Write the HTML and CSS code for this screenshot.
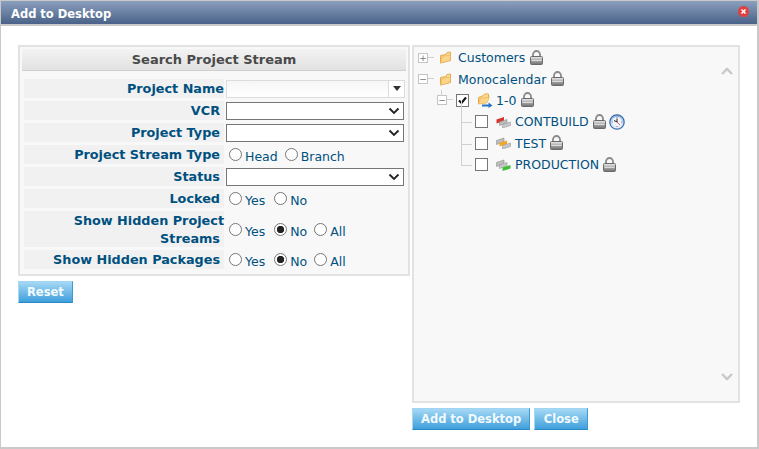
FILE: index.html
```html
<!DOCTYPE html>
<html lang="en">
<head>
<meta charset="utf-8">
<title>Add to Desktop</title>
<link rel="stylesheet" href="styles.css">
</head>
<body>
<svg class="defs" width="0" height="0" aria-hidden="true">
  <defs>
    <linearGradient id="lockBody" x1="0" y1="0" x2="0" y2="1"><stop offset="0" stop-color="#ececec"/><stop offset=".5" stop-color="#a8a8a8"/><stop offset="1" stop-color="#6f6f6f"/></linearGradient>
    <linearGradient id="folderFill" x1="0" y1="0" x2="0" y2="1"><stop offset="0" stop-color="#fde4a0"/><stop offset="1" stop-color="#f3b95a"/></linearGradient>
    <linearGradient id="clockFace" x1="0" y1="0" x2="0" y2="1"><stop offset="0" stop-color="#8fb8e6"/><stop offset="1" stop-color="#e8f2fb"/></linearGradient>
    <symbol id="lock" viewBox="0 0 13 15">
      <path d="M3 7V4.500a3.500 3.500 0 0 1 7 0V7" fill="none" stroke="#8a8a8a" stroke-width="1.800"/>
      <rect x=".5" y="6.500" width="12" height="8" rx="1" fill="url(#lockBody)" stroke="#6a6a6a"/>
      <rect x="1.500" y="10" width="10" height="1" fill="#dcdcdc"/>
    </symbol>
    <symbol id="folder" viewBox="0 0 13 13">
      <path d="M1.500 12V4.500L7 3.500 8 1.500 11.500 1V9.500Z" fill="url(#folderFill)" stroke="#e5a94a"/>
      <path d="M1.500 12L3.500 5.500 11.500 4 11 9.500Z" fill="#fbd68a" stroke="#e8b25a" stroke-width=".6"/>
    </symbol>
    <symbol id="folderArrow" viewBox="0 0 16 15">
      <path d="M1.500 11V4.500L6.500 2.500 7.500 1 11.500 1V6Z" fill="url(#folderFill)" stroke="#e5a94a"/>
      <path d="M1.500 11L3.500 5.500 12.500 4 10 10Z" fill="#fbd68a" stroke="#e8b25a" stroke-width=".6"/>
      <path d="M5 12.500H12" stroke="#2a74c4" stroke-width="2"/>
      <path d="M11.500 9.500L15.500 12.500 11.500 15Z" fill="#2a74c4"/>
    </symbol>
    <symbol id="clock" viewBox="0 0 16 16">
      <circle cx="8" cy="8" r="7.200" fill="url(#clockFace)" stroke="#3a6aa8" stroke-width="1.200"/>
      <circle cx="8" cy="8" r="5" fill="#eef5fc"/>
      <path d="M8 4.500V8L5 6.500" fill="none" stroke="#222" stroke-width="1"/>
      <path d="M8 8L11 11" stroke="#c33" stroke-width=".8"/>
      <path d="M8 3v1M8 12v1M3 8h1M12 8h1" stroke="#c33" stroke-width=".8"/>
    </symbol>
  </defs>
</svg>
<div class="dialog">
  <header class="titlebar">
    <h1 class="title">Add to Desktop</h1>
    <svg class="close-x" viewBox="0 0 11 11" aria-label="Close"><circle cx="5.500" cy="5.500" r="5.500" fill="#e2403f"/><path d="M3.500 3.500l4 4M7.500 3.500l-4 4" stroke="#fff" stroke-width="1.600"/></svg>
  </header>
  <main class="content">
    <section class="left">
      <form class="panel">
        <h2 class="panel-head">Search Project Stream</h2>
        <div class="form-grid">
          <label class="lab flush">Project Name</label>
          <div class="ctl"><div class="combo"><input class="combo-input" type="text"><span class="combo-btn"><span class="tri"></span></span></div></div>
          <label class="lab">VCR</label>
          <div class="ctl"><select class="sel"><option></option></select></div>
          <label class="lab">Project Type</label>
          <div class="ctl"><select class="sel"><option></option></select></div>
          <label class="lab">Project Stream Type</label>
          <div class="ctl radios"><input class="rad" type="radio" name="t"><span class="opt">Head</span><input class="rad" type="radio" name="t"><span class="opt">Branch</span></div>
          <label class="lab">Status</label>
          <div class="ctl"><select class="sel"><option></option></select></div>
          <label class="lab">Locked</label>
          <div class="ctl radios"><input class="rad" type="radio" name="l"><span class="opt yes">Yes</span><input class="rad" type="radio" name="l"><span class="opt">No</span></div>
          <label class="lab"><span class="over">Show Hidden Project</span><br>Streams</label>
          <div class="ctl radios"><input class="rad" type="radio" name="s"><span class="opt yes">Yes</span><input class="rad" type="radio" name="s" checked><span class="opt">No</span><input class="rad" type="radio" name="s"><span class="opt">All</span></div>
          <label class="lab">Show Hidden Packages</label>
          <div class="ctl radios"><input class="rad" type="radio" name="p"><span class="opt yes">Yes</span><input class="rad" type="radio" name="p" checked><span class="opt">No</span><input class="rad" type="radio" name="p"><span class="opt">All</span></div>
        </div>
      </form>
      <div class="actions"><button class="btn" type="button">Reset</button></div>
    </section>
    <section class="right">
      <div class="tree-panel">
        <ul class="tree">
          <li class="node lv0"><span class="exp">+</span><svg class="ic-folder"><use href="#folder"/></svg><a class="name">Customers</a><svg class="ic-lock"><use href="#lock"/></svg></li>
          <li class="node lv0"><span class="exp">−</span><svg class="ic-folder"><use href="#folder"/></svg><a class="name">Monocalendar</a><svg class="ic-lock"><use href="#lock"/></svg></li>
          <li class="node lv1"><span class="exp up">−</span><input class="chk" type="checkbox" checked><svg class="ic-open"><use href="#folderArrow"/></svg><a class="name">1-0</a><svg class="ic-lock"><use href="#lock"/></svg></li>
          <li class="node lv2"><input class="chk" type="checkbox"><svg class="ic-stream" viewBox="0 0 15 12"><path d="M.5 3.500L8 1V5L.5 7.500Z" fill="#d8342c"/><path d="M3.500 6L11 3.500V7L3.500 9.500Z" fill="#bdbdbd" stroke="#8f8f8f" stroke-width=".6"/><path d="M6.500 8.500L14.500 6V9.500L6.500 12Z" fill="#c8c8c8" stroke="#9a9a9a" stroke-width=".6"/></svg><a class="name">CONTBUILD</a><svg class="ic-lock"><use href="#lock"/></svg><svg class="ic-clock"><use href="#clock"/></svg></li>
          <li class="node lv2"><input class="chk" type="checkbox"><svg class="ic-stream" viewBox="0 0 15 12"><path d="M.5 3.500L8 1V5L.5 7.500Z" fill="#bdbdbd" stroke="#8f8f8f" stroke-width=".6"/><path d="M3.500 6L11 3.500V7L3.500 9.500Z" fill="#f5a81e"/><path d="M6.500 8.500L14.500 6V9.500L6.500 12Z" fill="#c8c8c8" stroke="#9a9a9a" stroke-width=".6"/></svg><a class="name">TEST</a><svg class="ic-lock"><use href="#lock"/></svg></li>
          <li class="node lv2"><input class="chk" type="checkbox"><svg class="ic-stream" viewBox="0 0 15 12"><path d="M.5 3.500L8 1V5L.5 7.500Z" fill="#bdbdbd" stroke="#8f8f8f" stroke-width=".6"/><path d="M3.500 6L11 3.500V7L3.500 9.500Z" fill="#c8c8c8" stroke="#949494" stroke-width=".6"/><path d="M6.500 8.500L14.500 6V9.500L6.500 12Z" fill="#3fbf3a"/></svg><a class="name">PRODUCTION</a><svg class="ic-lock"><use href="#lock"/></svg></li>
        </ul>
        <svg class="chev chev-up" viewBox="0 0 12 8"><path d="M1 7L6 2l5 5" fill="none" stroke="#c8c8c8" stroke-width="2.400"/></svg>
        <svg class="chev chev-down" viewBox="0 0 12 8"><path d="M1 1l5 5 5-5" fill="none" stroke="#c8c8c8" stroke-width="2.400"/></svg>
      </div>
      <div class="actions"><button class="btn" type="button">Add to Desktop</button><button class="btn" type="button">Close</button></div>
    </section>
  </main>
</div>
</body>
</html>
```

FILE: styles.css
```css
* { box-sizing: border-box; }
html, body { margin: 0; padding: 0; }
body { width: 759px; height: 449px; background: #fff; font-family: "DejaVu Sans", sans-serif; overflow: hidden; }
.defs { position: absolute; }
.dialog { width: 759px; height: 449px; border: solid #c9c9c9; border-width: 1px 2px 2px 1px; display: flex; flex-direction: column; background: #fff; }
.titlebar { height: 25px; flex: none; display: flex; align-items: center; justify-content: space-between; padding: 0 8px 2px 10px; background: linear-gradient(#8b9fbd, #4a6289) padding-box; border-bottom: 2px solid #c9c9c9; }
.title { margin: 0; padding-top: 4px; font-size: 11.500px; font-weight: bold; color: #fff; }
.close-x { width: 11px; height: 11px; flex: none; }
.content { flex: 1; display: flex; gap: 2px; padding: 19px 17px 0; }
.left { width: 392px; flex: none; }
.right { width: 328px; flex: none; }
.panel { height: 231px; margin: 0; padding: 2px; background: #f8f8f8; border: 2px solid #e2e2e2; }
.panel-head { margin: 0 0 8px; height: 22px; line-height: 21px; font-size: 13px; font-weight: bold; text-align: center; color: #4a4a4a; background: linear-gradient(#f3f3f3, #e2e2e2); border-bottom: 1px solid #cfcfcf; }
.form-grid { display: grid; grid-template-columns: 200px 1fr; grid-template-rows: repeat(6, 19px) 36px 19px; row-gap: 3px; column-gap: 2px; padding: 0 2px; }
.lab { display: block; padding: 1px 4px 0 0; font-size: 12.800px; font-weight: bold; line-height: 18px; color: #00507f; text-align: right; background: #f1f1f1; white-space: nowrap; }
.lab.flush { padding-right: 0; }
.over { margin-right: -4px; }
.ctl { display: flex; align-items: center; min-width: 0; }
.sel { appearance: none; width: 178px; height: 18px; font-size: 12px; border: 1px solid #767676; border-radius: 0; margin: 0; padding: 0; background: #fff url("data:image/svg+xml,%3Csvg xmlns='http://www.w3.org/2000/svg' width='12' height='8'%3E%3Cpath d='M1.500 1.500L6 6l4.500-4.500' fill='none' stroke='%23222' stroke-width='1.800'/%3E%3C/svg%3E") no-repeat right 3px center; }
.combo { width: 179px; height: 18px; display: flex; border: 1px solid #dcdcdc; background: #fff; }
.combo-input { flex: 1; min-width: 0; border: 0; padding: 0; outline: 0; background: linear-gradient(#f6f6f6, #fff); }
.combo-btn { width: 16px; border-left: 1px solid #dcdcdc; display: flex; align-items: center; justify-content: center; }
.tri { width: 0; height: 0; border: 4px solid transparent; border-top: 5px solid #333; border-bottom: 0; }
.radios { padding-left: 3px; }
.rad { appearance: none; width: 13px; height: 13px; margin: 0 3px 0 0; flex: none; border: 1px solid #767676; border-radius: 50%; background: #fff; }
.rad:checked { background: radial-gradient(circle, #222 3.400px, #fff 4px); }
.opt { font-size: 12.500px; line-height: 16px; color: #00507f; margin-right: 7px; padding-top: 5px; }
.opt.yes { margin-right: 9px; }
.actions { display: flex; gap: 4px; margin-top: 5px; }
.btn { height: 22px; min-width: 54px; padding: 0 8px; border: 1px solid #3f98d4; border-top-color: #9fd4f2; border-left-color: #a9d8f2; border-bottom-color: #2a88c9; font: bold 11.500px "DejaVu Sans", sans-serif; color: #f2fafe; background: linear-gradient(#a5d8f4, #3f9fdc); }
.tree-panel { position: relative; height: 358px; background: #f8f8f8; border: 2px solid #e2e2e2; }
.tree { list-style: none; margin: 0; padding: 0; }
.node { position: relative; height: 21.400px; display: flex; align-items: center; font-size: 12.500px; }
.lv0 { padding-left: 4px; }
.lv1 { padding-left: 23px; }
.lv2 { padding-left: 61px; }
.exp { position: relative; width: 10px; height: 10px; border: 1px solid #c4c4c4; background: #fff; color: #777; font-size: 9px; line-height: 8px; text-align: center; flex: none; margin-right: 11px; }
.exp::after { content: ""; position: absolute; left: 9px; top: 3px; width: 6px; height: 1px; background: #d0d0d0; }
.exp.up::before { content: ""; position: absolute; left: 3px; top: -6px; width: 1px; height: 6px; background: #d0d0d0; }
.lv1 .exp { margin-right: 9px; }
.chk { appearance: none; width: 13px; height: 13px; margin: 0 8px 0 0; flex: none; border: 1px solid #767676; background: #fff; }
.chk:checked { background: #fff url("data:image/svg+xml,%3Csvg xmlns='http://www.w3.org/2000/svg' width='11' height='11'%3E%3Cpath d='M2 5.500l2.500 2.500L9 2.500' fill='none' stroke='%23111' stroke-width='2'/%3E%3C/svg%3E") no-repeat center; }
.lv2::before { content: ""; position: absolute; left: 47px; top: -10px; width: 1px; height: 22px; background: #d0d0d0; }
.lv2::after { content: ""; position: absolute; left: 47px; top: 11px; width: 11px; height: 1px; background: #d0d0d0; }
.ic-folder { width: 13px; height: 13px; flex: none; margin-right: 6px; }
.ic-open { width: 16px; height: 15px; flex: none; margin-right: 3px; }
.ic-stream { width: 15px; height: 12px; flex: none; margin-right: 4px; }
.ic-lock { width: 13px; height: 15px; flex: none; margin-left: 5px; margin-top: -1px; }
.lv2 .ic-lock { margin-left: 4px; }
.ic-clock { width: 16px; height: 16px; flex: none; margin-left: 3px; }
.name { color: #00507f; }
.chev { position: absolute; right: 5px; width: 12px; height: 8px; }
.chev-up { top: 20px; }
.chev-down { bottom: 20px; }
```
